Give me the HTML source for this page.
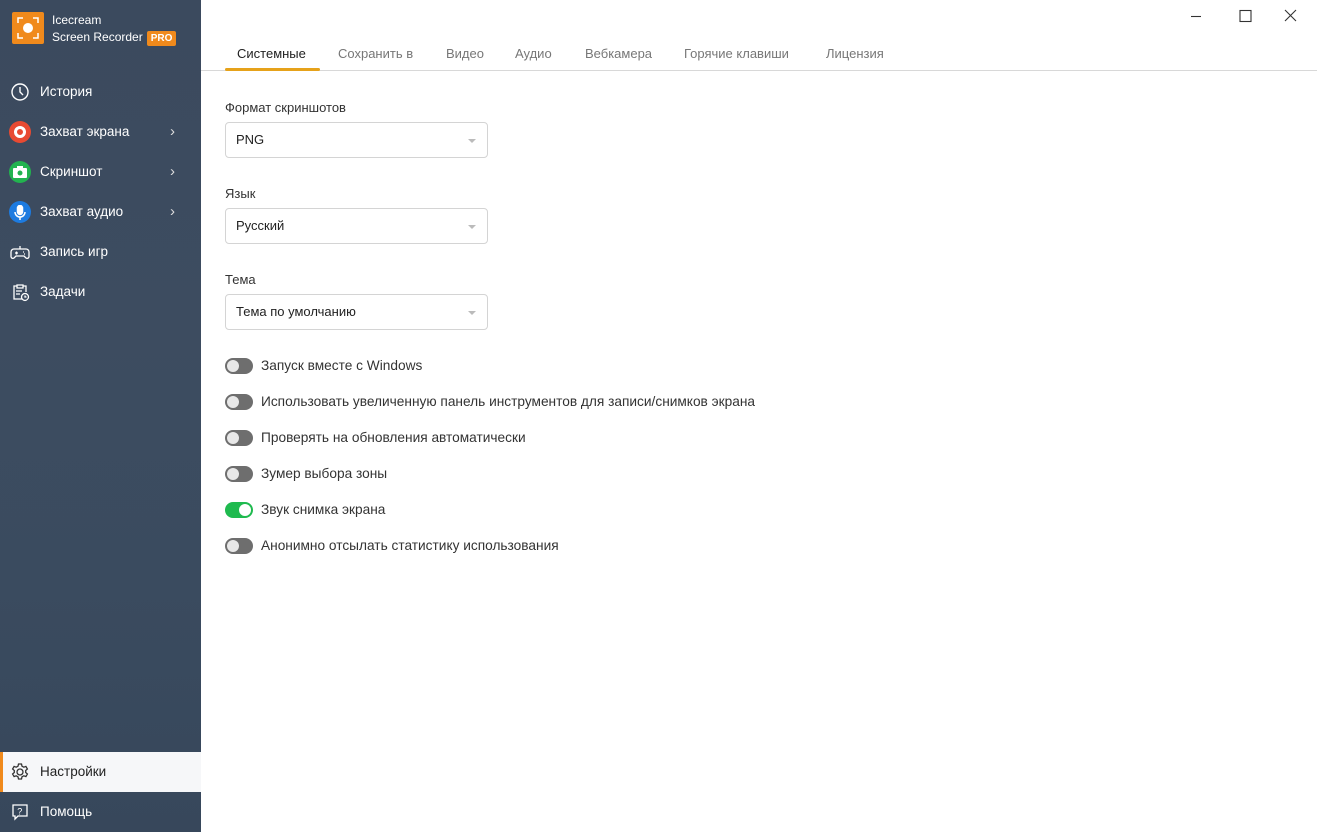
<!DOCTYPE html>
<html><head><meta charset="utf-8"><style>
*{margin:0;padding:0;box-sizing:border-box}
body{width:1317px;height:832px;overflow:hidden;font-family:"Liberation Sans","DejaVu Sans",sans-serif;background:#fff;position:relative}
.side{position:absolute;left:0;top:0;width:201px;height:832px;background:linear-gradient(180deg,#3b4a5e 0%,#3d4c60 40%,#3a4b5f 70%,#37475b 100%);color:#fff}
.logo{position:absolute;left:12px;top:12px;width:32px;height:32px;background:#f08a1c;border-radius:2px}
.logo i{position:absolute;left:11px;top:11px;width:10px;height:10px;border-radius:50%;background:#fff}
.brand{position:absolute;left:52px;top:12px;font-size:12px;line-height:17px;color:#fff}
.pro{display:inline-block;background:#f08a1c;color:#fff;font-size:10px;font-weight:bold;padding:0 4px;border-radius:2px;line-height:15px;margin-left:4px}
.item{position:absolute;left:0;width:201px;height:40px;font-size:13.5px;line-height:40px;padding-left:40px;color:#fff}
.ic{position:absolute;left:9px;top:9px;width:22px;height:22px;border-radius:50%}
.chev{position:absolute;left:170px;top:0;font-size:15px;color:#ddd}
.active{background:#f6f7f9;color:#222;border-left:3px solid #f08a1c;padding-left:37px}
.tabs{position:absolute;left:225px;top:46px;font-size:13px;color:#777}
.tabs span{position:absolute;white-space:nowrap;top:0}
.tline{position:absolute;left:201px;right:0;top:70px;height:1px;background:#d8d8d8}
.lbl{position:absolute;left:225px;font-size:13px;color:#333}
.sel{position:absolute;left:225px;width:263px;height:36px;border:1px solid #d4d4d4;border-radius:4px;font-size:13px;color:#222;line-height:34px;padding-left:10px}
.sel:after{content:"";position:absolute;right:11px;top:16px;border:4px solid transparent;border-top:4px solid #bbb}
.tg{position:absolute;left:225px;width:28px;height:16px;border-radius:8px;background:#6e6e6e}
.tg i{position:absolute;left:2px;top:2px;width:12px;height:12px;border-radius:50%;background:#e8e8e8}
.tg.on{background:#1fba4f}.tg.on i{left:14px;background:#fff}
.tt{position:absolute;left:261px;font-size:13.7px;color:#333;white-space:nowrap}
</style></head><body>
<div class="side">
 <div class="logo"><i></i>
  <svg width="32" height="32" style="position:absolute;left:0;top:0" fill="none" stroke="#fff" stroke-width="1.5"><path d="M6 11V6h5M21 6h5v5M26 21v5h-5M11 26H6v-5"/></svg></div>
 <div class="brand">Icecream<br>Screen Recorder<span class="pro">PRO</span></div>
 <div class="item" style="top:72px"><svg class="ic" viewBox="0 0 22 22" fill="none" stroke="#fff" stroke-width="1.4"><circle cx="11" cy="11" r="8"/><path d="M11 6v5l3 3"/></svg>История</div>
 <div class="item" style="top:112px"><span class="ic" style="background:#e84a32"></span><span style="position:absolute;left:14px;top:14px;width:12px;height:12px;border-radius:50%;border:3px solid #fff"></span>Захват экрана<span class="chev">›</span></div>
 <div class="item" style="top:152px"><span class="ic" style="background:#22b34f"></span><svg style="position:absolute;left:13px;top:14px" width="14" height="12" fill="#fff"><rect x="0" y="2" width="14" height="10" rx="1"/><rect x="4" y="0" width="6" height="3"/><circle cx="7" cy="7" r="2.5" fill="#22b34f"/></svg>Скриншот<span class="chev">›</span></div>
 <div class="item" style="top:192px"><span class="ic" style="background:#1d7be0"></span><svg style="position:absolute;left:14px;top:13px" width="12" height="15" fill="none" stroke="#fff" stroke-width="1.5"><rect x="3.5" y="0.5" width="5" height="9" rx="2.5" fill="#fff"/><path d="M1 7a5 5 0 0 0 10 0M6 12v3"/></svg>Захват аудио<span class="chev">›</span></div>
 <div class="item" style="top:232px"><svg class="ic" viewBox="0 0 22 22" fill="none" stroke="#fff" stroke-width="1.3"><path d="M5 8h12a3 3 0 0 1 3 3v5a2 2 0 0 1-3 1l-2-2H7l-2 2a2 2 0 0 1-3-1v-5a3 3 0 0 1 3-3zM11 8V5M6 12h3M7.5 10.5v3M14 11h1M15 13h1"/></svg>Запись игр</div>
 <div class="item" style="top:272px"><svg class="ic" viewBox="0 0 22 22" fill="none" stroke="#fff" stroke-width="1.3"><path d="M13 18H5V5h3M14 5h3v6M8 4h6v3H8zM7 10h6M7 13h4"/><circle cx="16" cy="16" r="3.5"/><path d="M16 14.5v1.5h1.5"/></svg>Задачи</div>
 <div class="item active" style="top:752px"><svg class="ic" viewBox="0 0 22 22" fill="none" stroke="#333" stroke-width="1.3" style="left:6px"><circle cx="11" cy="11" r="3"/><path d="M9.5 3h3l.5 2.2 1.8 1 2.1-.8 1.5 2.6-1.7 1.5v2l1.7 1.5-1.5 2.6-2.1-.8-1.8 1-.5 2.2h-3l-.5-2.2-1.8-1-2.1.8-1.5-2.6 1.7-1.5v-2L3.6 8l1.5-2.6 2.1.8 1.8-1z"/></svg>Настройки</div>
 <div class="item" style="top:792px"><svg class="ic" viewBox="0 0 22 22" fill="none" stroke="#fff" stroke-width="1.3"><path d="M4 4h14v11H9l-3 3v-3H4z"/><text x="8.3" y="13.5" font-size="9" fill="#fff" stroke="none" font-family="Liberation Sans">?</text></svg>Помощь</div>
</div>
<svg style="position:absolute;left:1185px;top:8px" width="120" height="16" fill="none" stroke="#333" stroke-width="1.1"><path d="M6 8.5h10"/><rect x="55" y="2.5" width="11" height="11"/><path d="M100 2l11 11M111 2l-11 11"/></svg>
<div class="tabs">
 <span style="left:12px;color:#222">Системные</span><span style="left:113px">Сохранить в</span><span style="left:221px">Видео</span><span style="left:290px">Аудио</span><span style="left:360px">Вебкамера</span><span style="left:459px">Горячие клавиши</span><span style="left:601px">Лицензия</span>
</div>
<div class="tline"></div>
<div style="position:absolute;left:225px;top:68px;width:95px;height:3px;background:#e6a21a;border-radius:2px"></div>
<div class="lbl" style="top:100px">Формат скриншотов</div>
<div class="sel" style="top:122px">PNG</div>
<div class="lbl" style="top:186px">Язык</div>
<div class="sel" style="top:208px">Русский</div>
<div class="lbl" style="top:272px">Тема</div>
<div class="sel" style="top:294px">Тема по умолчанию</div>
<div class="tg" style="top:358px"><i></i></div><div class="tt" style="top:358px">Запуск вместе с Windows</div>
<div class="tg" style="top:394px"><i></i></div><div class="tt" style="top:394px">Использовать увеличенную панель инструментов для записи/снимков экрана</div>
<div class="tg" style="top:430px"><i></i></div><div class="tt" style="top:430px">Проверять на обновления автоматически</div>
<div class="tg" style="top:466px"><i></i></div><div class="tt" style="top:466px">Зумер выбора зоны</div>
<div class="tg on" style="top:502px"><i></i></div><div class="tt" style="top:502px">Звук снимка экрана</div>
<div class="tg" style="top:538px"><i></i></div><div class="tt" style="top:538px">Анонимно отсылать статистику использования</div>
</body></html>
